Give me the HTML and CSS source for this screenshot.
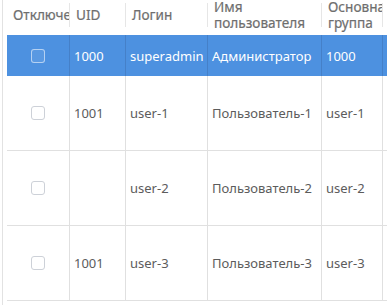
FILE: index.html
```html
<!DOCTYPE html>
<html lang="ru">
<head>
  <meta charset="UTF-8">
  <meta name="viewport" content="width=device-width, initial-scale=1.0">
  <title>Пользователи</title>
  <link rel="stylesheet" href="styles.css">
</head>
<body>
  <div class="grid-wrap">
    <div class="users-table">
      <div class="row head">
        <div class="hcell"><div class="hcell-in">Отключен</div></div>
        <div class="hcell"><div class="hcell-in">UID</div></div>
        <div class="hcell"><div class="hcell-in">Логин</div></div>
        <div class="hcell"><div class="hcell-in">Имя<br>пользователя</div></div>
        <div class="hcell"><div class="hcell-in">Основная<br>группа</div></div>
        <div class="hcell"><div class="hcell-in">Группы</div></div>
      </div>

      <div class="row selected">
        <div class="cell check"><span class="checkbox"></span></div>
        <div class="cell">1000</div>
        <div class="cell">superadmin</div>
        <div class="cell">Администратор</div>
        <div class="cell">1000</div>
        <div class="cell"></div>
      </div>

      <div class="row tall">
        <div class="cell check"><span class="checkbox"></span></div>
        <div class="cell">1001</div>
        <div class="cell">user-1</div>
        <div class="cell">Пользователь-1</div>
        <div class="cell">user-1</div>
        <div class="cell"></div>
      </div>

      <div class="row tall">
        <div class="cell check"><span class="checkbox"></span></div>
        <div class="cell"></div>
        <div class="cell">user-2</div>
        <div class="cell">Пользователь-2</div>
        <div class="cell">user-2</div>
        <div class="cell"></div>
      </div>

      <div class="row tall">
        <div class="cell check"><span class="checkbox"></span></div>
        <div class="cell">1001</div>
        <div class="cell">user-3</div>
        <div class="cell">Пользователь-3</div>
        <div class="cell">user-3</div>
        <div class="cell"></div>
      </div>
    </div>
  </div>
</body>
</html>
```

FILE: styles.css
```css
html, body {
  margin: 0;
  padding: 0;
  height: 100%;
  overflow: hidden;
  background-color: #fff;
}

body {
  font-family: "Noto Sans", "Open Sans", sans-serif;
  font-size: 13px;
  color: #5c5c5c;
}

.grid-wrap {
  margin-left: 2px;
  padding-left: 4px;
  border-left: 1px solid #e2e2e2;
  height: 100%;
}

.users-table {
  width: 460px;
}

.row {
  display: grid;
  grid-template-columns: 63px 56px 82px 114px 61px 84px;
}

.head {
  height: 35px;
}

.hcell {
  padding: 3px 0 8px;
  box-sizing: border-box;
  height: 35px;
}

.hcell-in {
  height: 24px;
  box-sizing: border-box;
  border-right: 1px solid #e6e6e6;
  padding-left: 6px;
  display: flex;
  align-items: center;
  white-space: nowrap;
  overflow-x: clip;
  overflow-y: visible;
  line-height: 16px;
  font-size: 13.6px;
  color: #6e6e6e;
  -webkit-text-stroke: 0.2px #6e6e6e;
}

.cell {
  border-right: 1px solid #e0e0e0;
  padding-left: 4px;
  display: flex;
  align-items: center;
  white-space: nowrap;
  overflow: hidden;
}

.check {
  justify-content: center;
  padding-left: 0;
}

.checkbox {
  width: 14px;
  height: 14px;
  box-sizing: border-box;
  border: 1px solid #cdd1d8;
  border-radius: 3px;
  background-color: #fff;
}

.selected {
  height: 41px;
  background-color: #4d91e0;
  color: #fff;
}

.selected .cell {
  border-right-color: #4580c8;
}

.selected .checkbox {
  background-color: rgba(255, 255, 255, 0.08);
  border-color: rgba(255, 255, 255, 0.55);
}

.tall {
  height: 75px;
  box-sizing: border-box;
  border-bottom: 1px solid #e0e0e0;
}
```
